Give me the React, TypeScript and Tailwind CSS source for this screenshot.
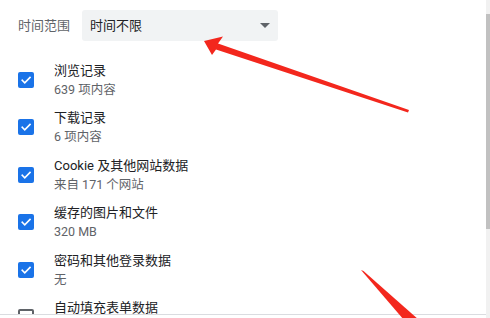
import React from 'react'

const items = [
  { title: '浏览记录', sub: '639 项内容', checked: true },
  { title: '下载记录', sub: '6 项内容', checked: true },
  { title: 'Cookie 及其他网站数据', sub: '来自 171 个网站', checked: true },
  { title: '缓存的图片和文件', sub: '320 MB', checked: true },
  { title: '密码和其他登录数据', sub: '无', checked: true },
  { title: '自动填充表单数据', sub: '', checked: false },
]

function Checkbox({ checked }: { checked: boolean }) {
  if (!checked) {
    return <div className="w-4 h-4 shrink-0 rounded-[2px] border-2 border-[#5f6368] bg-white" />
  }
  return (
    <div className="w-4 h-4 shrink-0 rounded-[2px] bg-[#1a73e8] flex items-center justify-center">
      <svg width="12" height="12" viewBox="0 0 24 24" fill="none">
        <path d="M4.5 12.5l5 5L20 7" stroke="white" strokeWidth="3.2" strokeLinecap="square" />
      </svg>
    </div>
  )
}

export default function App() {
  return (
    <div
      className="relative w-[490px] h-[318px] overflow-hidden bg-white flex"
      style={{ fontFamily: 'Roboto, "Noto Sans CJK SC", sans-serif' }}
    >
      <div className="flex-1 h-[315px] overflow-hidden border-b border-[#dadce0] pl-[18px] pt-[10px]">
        {/* time range */}
        <div className="flex items-center h-[31px]">
          <span className="w-[64px] text-[13px] text-[#5f6368]">时间范围</span>
          <div className="w-[196px] h-[31px] bg-[#f1f3f4] rounded-[3px] flex items-center justify-between pl-[8px] pr-[8px]">
            <span className="text-[13px] text-[#202124]">时间不限</span>
            <div className="w-0 h-0 border-l-[5px] border-r-[5px] border-t-[5px] border-l-transparent border-r-transparent border-t-[#5f6368]" />
          </div>
        </div>

        <div className="mt-[15px] flex flex-col">
          {items.map((it) => (
            <div key={it.title} className="h-[47.5px] shrink-0 flex items-center gap-[20px]">
              <Checkbox checked={it.checked} />
              <div className="flex flex-col">
                <span className="text-[13px] leading-[19px] text-[#202124]">{it.title}</span>
                <span className="text-[12.5px] leading-[19px] text-[#5f6368]">{it.sub || '\u00a0'}</span>
              </div>
            </div>
          ))}
        </div>
      </div>

      {/* scrollbar */}
      <div className="w-[4px] h-full bg-[#f1f1f1] shrink-0">
        <div className="mt-[14px] h-[215px] bg-[#c1c1c1]" />
      </div>

      {/* red annotation arrows */}
      <svg className="absolute inset-0 pointer-events-none" width="490" height="318" viewBox="0 0 490 318">
        <polygon
          points="204,41 223,36.5 218,43.5 409,110 408,112.5 216,49.5 212,55"
          fill="#f3271d"
        />
        <polygon points="361,270 363.5,271 419,320 404,320" fill="#f3271d" />
      </svg>
    </div>
  )
}
